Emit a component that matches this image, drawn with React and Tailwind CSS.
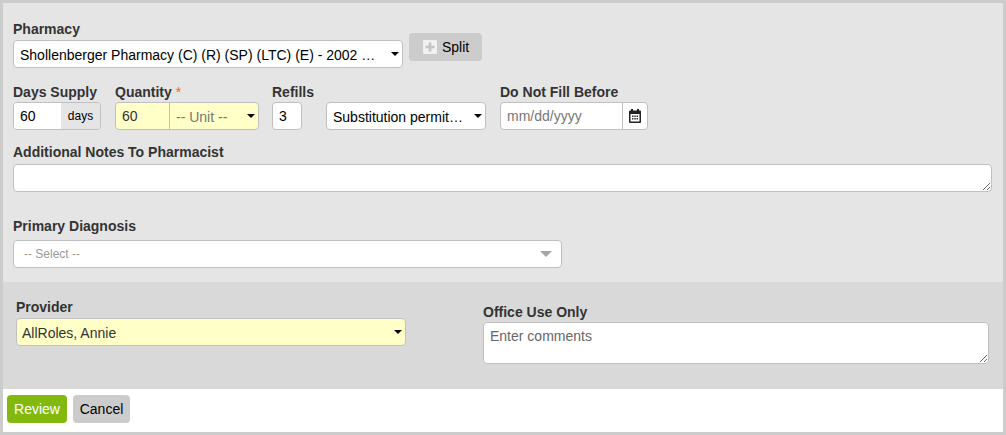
function Caret({ color = 'border-t-black' }) {
  return <span className={`w-0 h-0 shrink-0 border-x-[4px] border-x-transparent border-t-[4px] ${color}`} />;
}

function CalendarIcon() {
  return (
    <svg width="12" height="14" viewBox="0 0 12 14">
      <path d="M2 0h2v2H2zM8 0h2v2H8z" fill="#222" />
      <path fillRule="evenodd" d="M1 1.5h10a1 1 0 0 1 1 1V13a1 1 0 0 1-1 1H1a1 1 0 0 1-1-1V2.500a1 1 0 0 1 1-1zM1.500 5v7.500h9V5z" fill="#222" />
      <path d="M3 6.500h1.500V8H3zM5.250 6.500h1.500V8h-1.500zM7.500 6.500H9V8H7.500zM3 9h1.500v1.500H3zM5.250 9h1.500v1.500h-1.500zM7.500 9H9v1.500H7.500z" fill="#333" />
    </svg>
  );
}

function FieldLabel({ children, className = '' }) {
  return <div className={`h-5 leading-5 text-[14px] font-bold text-[#333] whitespace-nowrap ${className}`}>{children}</div>;
}

function SelectBox({ children, className = '', textClass = 'text-black' }) {
  return (
    <div className={`h-7 flex items-center justify-between pl-[6px] pr-[3px] border border-[#c0c0c0] rounded-[4px] text-[14px] ${className}`}>
      <span className={`whitespace-nowrap pt-[2px] ${textClass}`}>{children}</span>
      <Caret />
    </div>
  );
}

export default function App() {
  return (
    <div className="w-[1006px] h-[435px] border-[3px] border-[#cccccc] bg-white font-['Liberation_Sans',Arial,sans-serif] overflow-hidden">
      <div className="h-[279px] bg-[#e5e5e5] pt-4 pl-[10px]">
        <FieldLabel>Pharmacy</FieldLabel>
        <div className="flex items-start">
          <SelectBox className="w-[390px] mt-px bg-white">
            Shollenberger Pharmacy (C) (R) (SP) (LTC) (E) - 2002 …
          </SelectBox>
          <button className="ml-[6px] -mt-[6px] w-[73px] h-7 flex items-center pl-[14px] gap-[5px] bg-[#cccccc] rounded-[4px] text-[14px] text-black">
            <svg width="14" height="14" viewBox="0 0 14 14">
              <rect width="14" height="14" rx="1" fill="#f1f1f1" />
              <path d="M7 2.5v9M2.5 7h9" stroke="#c4c4c4" strokeWidth="2.6" />
            </svg>
            Split
          </button>
        </div>

        <div className="flex items-start mt-[14px]">
          <div className="w-[88px]">
            <FieldLabel>Days Supply</FieldLabel>
            <div className="h-7 flex border border-[#c0c0c0] rounded-[4px] overflow-hidden text-[14px]">
              <input defaultValue="60" className="w-[47px] bg-white pl-[6px] text-black outline-none" />
              <span className="flex-1 bg-[#e5e5e5] text-[12px] flex items-center justify-center text-black">days</span>
            </div>
          </div>
          <div className="w-[144px] ml-[14px]">
            <FieldLabel>Quantity <span className="text-[#f26a21] font-normal">*</span></FieldLabel>
            <div className="h-7 flex bg-[#ffffc8] border border-[#c0c0c0] rounded-[4px] overflow-hidden text-[14px]">
              <input defaultValue="60" className="w-[53px] bg-transparent pl-[6px] text-[#333] outline-none" />
              <div className="flex-1 border-l border-[#c0c0c0] flex items-center justify-between pl-[6px] pr-[3px] text-[#777]">
                <span className="pt-[2px]">-- Unit --</span>
                <Caret />
              </div>
            </div>
          </div>
          <div className="w-[30px] ml-[13px]">
            <FieldLabel>Refills</FieldLabel>
            <input defaultValue="3" className="block w-full h-7 bg-white border border-[#c0c0c0] rounded-[4px] pl-[6px] text-[14px] text-black outline-none" />
          </div>
          <SelectBox className="w-[160px] ml-6 mt-5 bg-white">Substitution permit…</SelectBox>
          <div className="w-[148px] ml-[14px]">
            <FieldLabel>Do Not Fill Before</FieldLabel>
            <div className="h-7 flex bg-white border border-[#c0c0c0] rounded-[4px] overflow-hidden text-[14px]">
              <input placeholder="mm/dd/yyyy" className="w-[121px] pl-[6px] outline-none placeholder:text-[#777]" />
              <span className="flex-1 border-l border-[#c0c0c0] flex items-center justify-center">
                <CalendarIcon />
              </span>
            </div>
          </div>
        </div>

        <FieldLabel className="mt-3">Additional Notes To Pharmacist</FieldLabel>
        <textarea className="block w-[979px] h-7 mt-[2px] bg-white border border-[#c0c0c0] rounded-[4px] outline-none" />

        <FieldLabel className="mt-6">Primary Diagnosis</FieldLabel>
        <div className="w-[549px] h-7 mt-1 flex items-center justify-between pl-[10px] pr-[9px] bg-white border border-[#c0c0c0] rounded-[4px] text-[12px] text-[#999]">
          -- Select --
          <span className="w-0 h-0 border-x-[6px] border-x-transparent border-t-[6px] border-t-[#a6a6a6]" />
        </div>
      </div>

      <div className="h-[107px] bg-[#d9d9d9] pt-[15px] pl-[13px] flex items-start">
        <div className="w-[390px]">
          <FieldLabel>Provider</FieldLabel>
          <SelectBox className="mt-px bg-[#ffffc8]" textClass="text-[#333] -ml-px">AllRoles, Annie</SelectBox>
        </div>
        <div className="w-[506px] ml-[77px] pt-[5px]">
          <FieldLabel>Office Use Only</FieldLabel>
          <textarea
            placeholder="Enter comments"
            className="block w-full h-[42px] bg-white border border-[#c0c0c0] rounded-[4px] px-[6px] py-[3px] text-[14px] leading-5 outline-none placeholder:text-[#666]"
          />
        </div>
      </div>

      <div className="flex gap-[6px] pt-[6px] pl-1 text-[14px]">
        <button className="w-[60px] h-7 bg-[#83b90f] text-white rounded-[4px]">Review</button>
        <button className="w-[57px] h-7 bg-[#cccccc] text-black rounded-[4px]">Cancel</button>
      </div>
    </div>
  );
}
